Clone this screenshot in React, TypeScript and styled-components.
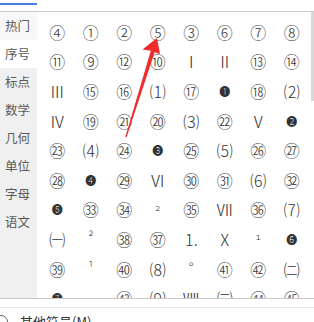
import React from "react";
import styled, { createGlobalStyle } from "styled-components";

const GlobalStyle = createGlobalStyle`
  body {
    margin: 0;
    background: #fff;
  }
`;

const Panel = styled.div`
  position: relative;
  width: 314px;
  height: 322px;
  overflow: hidden;
  background: #fff;
  font-family: "Noto Sans CJK SC", "DejaVu Sans", sans-serif;
`;

const TabStrip = styled.div`
  height: 8px;
  border-bottom: 1px solid #cccccc;
  box-sizing: content-box;

  > .indicator {
    width: 37px;
    height: 2px;
    margin-top: 3px;
    background: #4680de;
  }
`;

const Body = styled.div`
  display: flex;
  height: 286px;
`;

const Sidebar = styled.div`
  width: 37px;
  display: flex;
  flex-direction: column;
  background: #f0f0f0;
`;

const NavItem = styled.div<{ $state?: "active" | "hover" }>`
  height: 28px;
  line-height: 28px;
  padding-left: 5px;
  font-size: 12.5px;
  color: #5a5a5a;
  background: ${(p) =>
    p.$state === "active" ? "#ffffff" : p.$state === "hover" ? "#f8f8f8" : "transparent"};
`;

const GridArea = styled.div`
  flex: 1;
  display: flex;
  overflow: hidden;
`;

const SymbolGrid = styled.div`
  flex: 1;
  display: grid;
  grid-template-columns: repeat(8, 33.5px);
  grid-auto-rows: 29.6px;
  padding: 5px 0 0 3.5px;
  align-content: start;
`;

const Cell = styled.div<{ $size: number; $lift?: number }>`
  display: flex;
  align-items: center;
  justify-content: center;
  font-size: ${(p) => p.$size}px;
  font-weight: 300;
  color: #333;
  transform: translateY(${(p) => p.$lift || 0}px);
`;

const ScrollTrack = styled.div`
  width: 3px;

  > .thumb {
    height: 89px;
    background: #d8d8d8;
  }
`;

const Footer = styled.div`
  border-top: 1px solid #c9c9c9;
  padding-top: 8px;
`;

const FooterRow = styled.div`
  display: flex;
  align-items: center;
  gap: 12px;
  border-top: 1px solid #e6e6e6;
  padding-top: 4px;
  line-height: 20px;
  font-size: 13px;
  color: #333;
`;

const Radio = styled.span`
  width: 12px;
  height: 12px;
  margin-left: -6px;
  border: 1px solid #666;
  border-radius: 50%;
`;

const Arrow = styled.svg`
  position: absolute;
  left: 0;
  top: 0;
  pointer-events: none;
`;

const categories = ["热门", "序号", "标点", "数学", "几何", "单位", "字母", "语文"];

type Sym = { c: string; s: number; l?: number };

const rows: string[][] = [
  ["④", "①", "②", "⑤", "③", "⑥", "⑦", "⑧"],
  ["⑪", "⑨", "⑫", "⑩", "Ⅰ", "Ⅱ", "⑬", "⑭"],
  ["Ⅲ", "⑮", "⑯", "⑴", "⑰", "❶", "⑱", "⑵"],
  ["Ⅳ", "⑲", "㉑", "⑳", "⑶", "㉒", "Ⅴ", "❷"],
  ["㉓", "⑷", "㉔", "❸", "㉕", "⑸", "㉖", "㉗"],
  ["㉘", "❹", "㉙", "Ⅵ", "㉚", "㉛", "⑹", "㉜"],
  ["❺", "㉝", "㉞", "₂", "㉟", "Ⅶ", "㊱", "⑺"],
  ["㈠", "²", "㊳", "㊲", "⒈", "Ⅹ", "₁", "❻"],
  ["㊴", "¹", "㊵", "⑻", "°", "㊶", "㊷", "㈡"],
  ["❼", "", "㊸", "⑼", "Ⅷ", "㈢", "㊹", "㊺"],
];

const symbolOf = (c: string): Sym => {
  if ("❶❷❸❹❺❻❼".includes(c)) return { c, s: 11 };
  if (c === "²" || c === "¹") return { c, s: 13, l: -2 };
  if (c === "₂" || c === "₁") return { c, s: 13, l: -4 };
  if (c === "°") return { c, s: 14, l: -2 };
  return { c, s: 16 };
};

export default function App() {
  return (
    <>
      <GlobalStyle />
      <Panel>
        <TabStrip>
          <div className="indicator" />
        </TabStrip>
        <Body>
          <Sidebar>
            {categories.map((name, i) => (
              <NavItem key={name} $state={i === 1 ? "active" : i === 0 ? "hover" : undefined}>
                {name}
              </NavItem>
            ))}
          </Sidebar>
          <GridArea>
            <SymbolGrid>
              {rows.flat().map((ch, i) => {
                const sym = symbolOf(ch);
                return (
                  <Cell key={i} $size={sym.s} $lift={sym.l}>
                    {sym.c}
                  </Cell>
                );
              })}
            </SymbolGrid>
            <ScrollTrack>
              <div className="thumb" />
            </ScrollTrack>
          </GridArea>
        </Body>
        <Footer>
          <FooterRow>
            <Radio />
            <span>其他符号(M)...</span>
          </FooterRow>
        </Footer>
        <Arrow width="314" height="322" viewBox="0 0 314 322">
          <polygon
            points="157,38 160,54 154.6,52.2 126.6,137.2 125.4,136.8 150.8,50.8 142.5,49.5"
            fill="#ef2b2d"
          />
        </Arrow>
      </Panel>
    </>
  );
}
